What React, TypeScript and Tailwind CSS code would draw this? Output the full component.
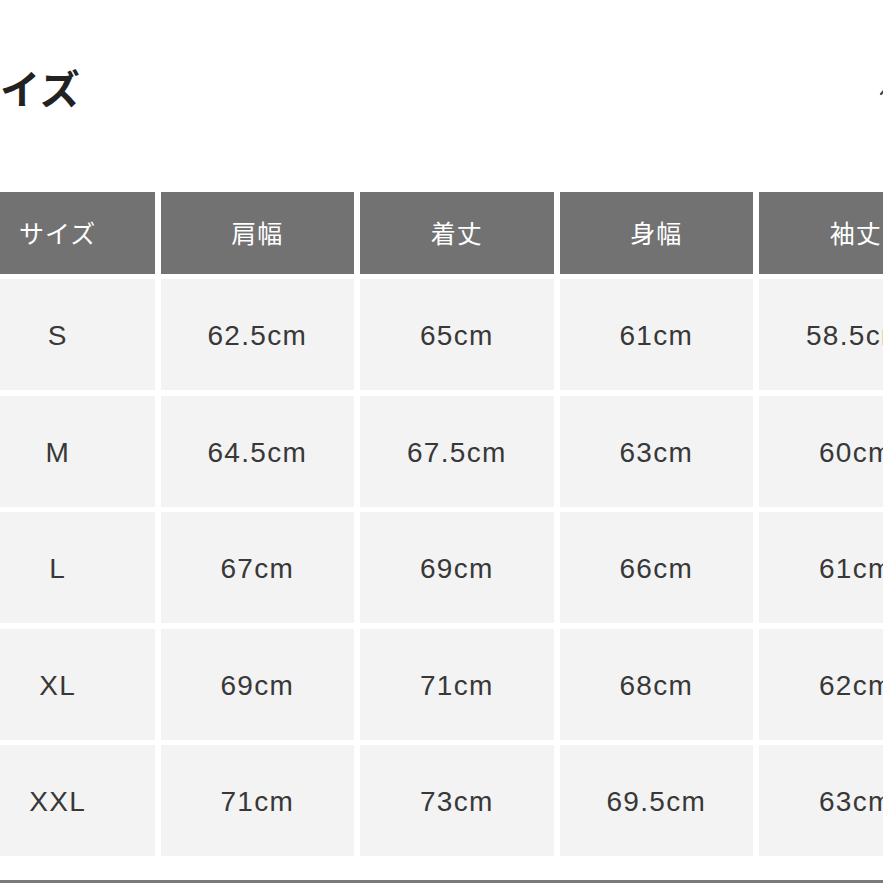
import React from "react";

const headers = ["サイズ", "肩幅", "着丈", "身幅", "袖丈"];
const rows = [
  ["S", "62.5cm", "65cm", "61cm", "58.5cm"],
  ["M", "64.5cm", "67.5cm", "63cm", "60cm"],
  ["L", "67cm", "69cm", "66cm", "61cm"],
  ["XL", "69cm", "71cm", "68cm", "62cm"],
  ["XXL", "71cm", "73cm", "69.5cm", "63cm"],
];

export default function App() {
  return (
    <div className="w-[883px] h-[883px] overflow-hidden bg-white flex flex-col" style={{ fontFamily: '"Noto Sans CJK JP", "Noto Sans", sans-serif' }}>
      <div className="flex items-center justify-between h-[192px] pb-[18px]">
        <div className="ml-[-41px] text-[40px] font-bold text-[#222] leading-none tracking-[1px]">サイズ</div>
        <svg width="20" height="20" viewBox="0 0 20 20" className="mr-[-15px] mt-[8px]">
          <path d="M3 13 L10 5 L17 13" fill="none" stroke="#444" strokeWidth="2.2" strokeLinecap="round" />
        </svg>
      </div>
      <div className="ml-[-39px] grid grid-cols-[repeat(5,193.5px)] gap-x-[6px] gap-y-[5.5px]">
        {headers.map((h) => (
          <div key={h} className="h-[82px] mb-[-0.5px] bg-[#727272] text-white text-[25px] tracking-[1px] flex items-center justify-center">
            {h}
          </div>
        ))}
        {rows.map((r) =>
          r.map((c, i) => (
            <div
              key={r[0] + i}
              className="h-[111px] pt-[3px] bg-[#f3f3f3] text-[#383838] text-[28px] tracking-[1.3px] flex items-center justify-center"
              style={{ fontFamily: '"Liberation Sans", Arial, sans-serif' }}
            >
              {c}
            </div>
          ))
        )}
      </div>
      <div className="mt-auto h-[3px] bg-[#7a7a7a]" />
    </div>
  );
}
